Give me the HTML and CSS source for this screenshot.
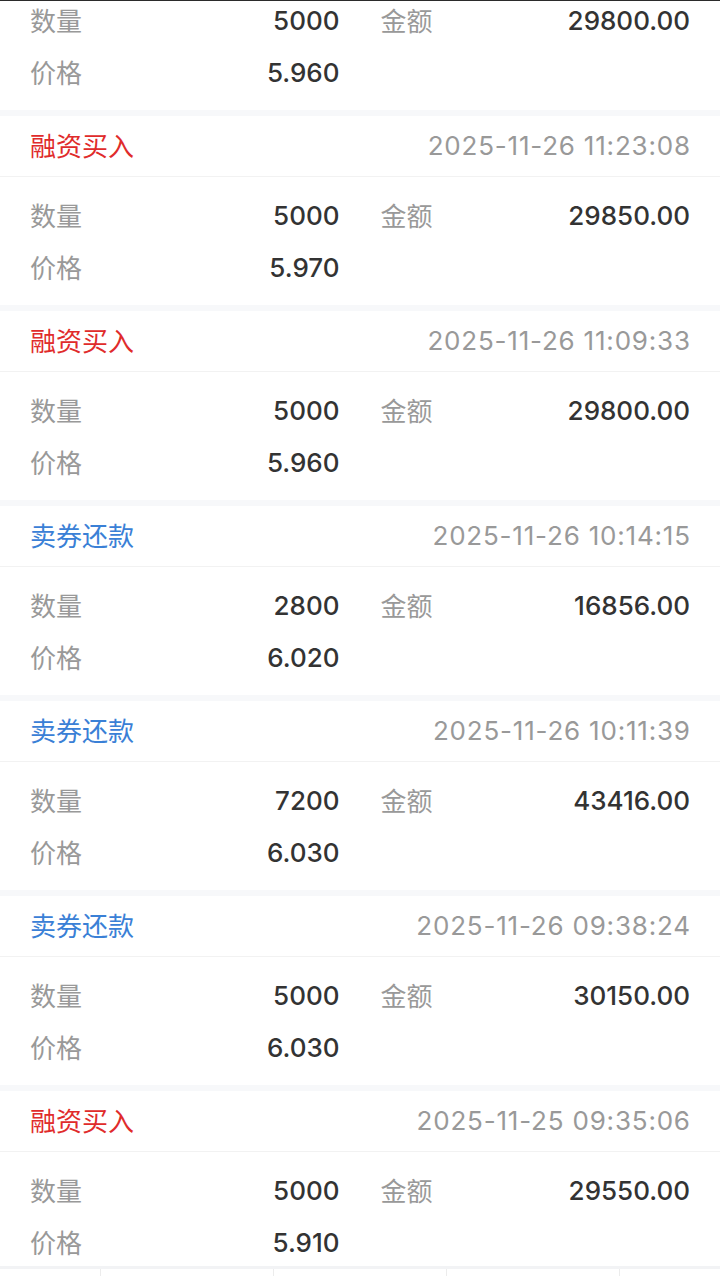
FILE: index.html
```html
<!DOCTYPE html>
<html lang="zh-CN">
<head>
    <meta charset="UTF-8">
    <meta name="viewport" content="width=device-width, initial-scale=1.0">
    <title>成交明细</title>
    <link rel="stylesheet" href="styles.css">
</head>
<body>
    <div class="list">
        <div class="card card-cut">
            <div class="card-body">
                <div class="cell"><span class="label">数量</span><span class="value">5000</span></div>
                <div class="cell"><span class="label">金额</span><span class="value">29800.00</span></div>
                <div class="cell"><span class="label">价格</span><span class="value">5.960</span></div>
            </div>
        </div>

        <div class="card">
            <div class="card-head">
                <span class="type buy">融资买入</span>
                <span class="time">2025-11-26 11:23:08</span>
            </div>
            <div class="card-body">
                <div class="cell"><span class="label">数量</span><span class="value">5000</span></div>
                <div class="cell"><span class="label">金额</span><span class="value">29850.00</span></div>
                <div class="cell"><span class="label">价格</span><span class="value">5.970</span></div>
            </div>
        </div>

        <div class="card">
            <div class="card-head">
                <span class="type buy">融资买入</span>
                <span class="time">2025-11-26 11:09:33</span>
            </div>
            <div class="card-body">
                <div class="cell"><span class="label">数量</span><span class="value">5000</span></div>
                <div class="cell"><span class="label">金额</span><span class="value">29800.00</span></div>
                <div class="cell"><span class="label">价格</span><span class="value">5.960</span></div>
            </div>
        </div>

        <div class="card">
            <div class="card-head">
                <span class="type repay">卖券还款</span>
                <span class="time">2025-11-26 10:14:15</span>
            </div>
            <div class="card-body">
                <div class="cell"><span class="label">数量</span><span class="value">2800</span></div>
                <div class="cell"><span class="label">金额</span><span class="value">16856.00</span></div>
                <div class="cell"><span class="label">价格</span><span class="value">6.020</span></div>
            </div>
        </div>

        <div class="card">
            <div class="card-head">
                <span class="type repay">卖券还款</span>
                <span class="time">2025-11-26 10:11:39</span>
            </div>
            <div class="card-body">
                <div class="cell"><span class="label">数量</span><span class="value">7200</span></div>
                <div class="cell"><span class="label">金额</span><span class="value">43416.00</span></div>
                <div class="cell"><span class="label">价格</span><span class="value">6.030</span></div>
            </div>
        </div>

        <div class="card">
            <div class="card-head">
                <span class="type repay">卖券还款</span>
                <span class="time">2025-11-26 09:38:24</span>
            </div>
            <div class="card-body">
                <div class="cell"><span class="label">数量</span><span class="value">5000</span></div>
                <div class="cell"><span class="label">金额</span><span class="value">30150.00</span></div>
                <div class="cell"><span class="label">价格</span><span class="value">6.030</span></div>
            </div>
        </div>

        <div class="card">
            <div class="card-head">
                <span class="type buy">融资买入</span>
                <span class="time">2025-11-25 09:35:06</span>
            </div>
            <div class="card-body">
                <div class="cell"><span class="label">数量</span><span class="value">5000</span></div>
                <div class="cell"><span class="label">金额</span><span class="value">29550.00</span></div>
                <div class="cell"><span class="label">价格</span><span class="value">5.910</span></div>
            </div>
        </div>
    </div>

    <div class="toolbar">
        <div class="tool tool-side"></div>
        <div class="tool"></div>
        <div class="tool"></div>
        <div class="tool"></div>
        <div class="tool tool-side"></div>
    </div>
</body>
</html>
```

FILE: styles.css
```css
body {
    margin: 0;
    font-family: Inter, "Noto Sans CJK SC", sans-serif;
    background-color: #f7f8fa;
    color: #333;
    border-top: 1px solid #2b2b2b;
    overflow: hidden;
    height: 1275px;
}
.list {
    display: flex;
    flex-direction: column;
    gap: 6px;
}
.card {
    background-color: #fff;
}
.card-cut .card-body {
    margin-top: -19px;
}
.card-head {
    height: 60px;
    padding: 0 30px;
    display: flex;
    align-items: center;
    justify-content: space-between;
    border-bottom: 1px solid #f2f2f2;
}
.type {
    font-family: "Noto Sans CJK SC", sans-serif;
    font-size: 26px;
    line-height: 1;
    margin-top: -2px;
}
.type.buy {
    color: #e02b2b;
}
.type.repay {
    color: #3a80d6;
}
.time {
    font-size: 26px;
    line-height: 1;
    letter-spacing: 0.8px;
    margin-right: -0.8px;
    color: #999;
}
.card-body {
    display: grid;
    grid-template-columns: 1fr 1fr;
    column-gap: 41px;
    padding: 13px 30px 11px;
}
.cell {
    height: 52px;
    display: flex;
    align-items: center;
    justify-content: space-between;
}
.label {
    font-family: "Noto Sans CJK SC", sans-serif;
    font-size: 26px;
    line-height: 1;
    margin-top: -2px;
    color: #999;
}
.value {
    font-size: 26px;
    font-weight: 500;
    line-height: 1;
    color: #333;
}
.toolbar {
    position: fixed;
    left: 0;
    right: 0;
    bottom: 0;
    height: 7px;
    display: flex;
    background-color: #fff;
    border-top: 3px solid #f2f3f5;
}
.tool {
    flex: 173;
    border-left: 1px solid #ececec;
}
.tool-side {
    flex: 100;
}
.tool:first-child {
    border-left: none;
}
```
